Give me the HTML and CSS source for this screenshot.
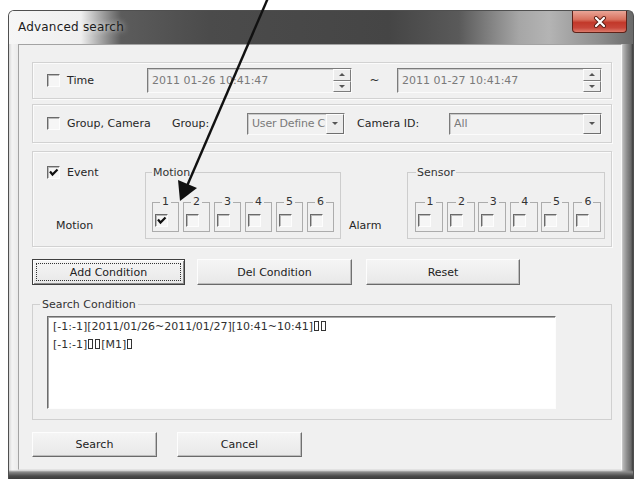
FILE: index.html
```html
<!DOCTYPE html>
<html lang="en">
<head>
<meta charset="UTF-8">
<title>Advanced search</title>
<link rel="stylesheet" href="styles.css">
</head>
<body>

<div class="win">
	<div class="caption">
		<span class="caption-text">Advanced search</span>
		<span class="close">
			<svg width="14" height="12" viewBox="0 0 14 12">
				<path d="M3 2 L11 10 M11 2 L3 10" stroke="#5a1d14" stroke-width="4" stroke-linecap="round"/>
				<path d="M3 2 L11 10 M11 2 L3 10" stroke="#fff" stroke-width="2.2" stroke-linecap="round"/>
			</svg>
		</span>
	</div>

	<div class="client">
		<!-- time range -->
		<div class="box box-time">
			<label class="lead"><span class="chk"></span>Time</label>
			<div class="field date">
				<span class="val">2011 01-26 10:41:47</span>
				<span class="spin"><i class="up"></i><i class="down"></i></span>
			</div>
			<span class="tilde">~</span>
			<div class="field date">
				<span class="val">2011 01-27 10:41:47</span>
				<span class="spin"><i class="up"></i><i class="down"></i></span>
			</div>
		</div>

		<!-- group / camera -->
		<div class="box box-cam">
			<label class="lead lead-wide"><span class="chk"></span>Group, Camera</label>
			<span class="lbl-group">Group:</span>
			<div class="field combo combo-group">
				<span class="val">User Define C</span>
				<span class="drop"></span>
			</div>
			<span class="lbl-cam">Camera ID:</span>
			<div class="field combo combo-cam">
				<span class="val">All</span>
				<span class="drop"></span>
			</div>
		</div>

		<!-- event -->
		<div class="box box-event">
			<div class="evside">
				<label class="lead"><span class="chk on"></span>Event</label>
				<span class="side-lbl">Motion</span>
			</div>
			<fieldset class="grp grp-motion">
				<legend>Motion</legend>
				<div class="minis">
					<fieldset class="mini"><legend>1</legend><span class="chk on"></span></fieldset>
					<fieldset class="mini"><legend>2</legend><span class="chk"></span></fieldset>
					<fieldset class="mini"><legend>3</legend><span class="chk"></span></fieldset>
					<fieldset class="mini"><legend>4</legend><span class="chk"></span></fieldset>
					<fieldset class="mini"><legend>5</legend><span class="chk"></span></fieldset>
					<fieldset class="mini"><legend>6</legend><span class="chk"></span></fieldset>
				</div>
			</fieldset>
			<span class="alarm-lbl">Alarm</span>
			<fieldset class="grp grp-sensor">
				<legend>Sensor</legend>
				<div class="minis">
					<fieldset class="mini"><legend>1</legend><span class="chk"></span></fieldset>
					<fieldset class="mini"><legend>2</legend><span class="chk"></span></fieldset>
					<fieldset class="mini"><legend>3</legend><span class="chk"></span></fieldset>
					<fieldset class="mini"><legend>4</legend><span class="chk"></span></fieldset>
					<fieldset class="mini"><legend>5</legend><span class="chk"></span></fieldset>
					<fieldset class="mini"><legend>6</legend><span class="chk"></span></fieldset>
				</div>
			</fieldset>
		</div>

		<div class="actions">
			<span class="btn btn-add"><span class="focus">Add Condition</span></span>
			<span class="btn btn-del">Del Condition</span>
			<span class="btn btn-reset">Reset</span>
		</div>

		<fieldset class="cond">
			<legend>Search Condition</legend>
			<div class="textbox">
				<p>[-1:-1][2011/01/26~2011/01/27][10:41~10:41]<i class="tofu"></i><i class="tofu"></i></p>
				<p>[-1:-1]<i class="tofu"></i><i class="tofu"></i>[M1]<i class="tofu"></i></p>
			</div>
		</fieldset>

		<div class="actions actions-bottom">
			<span class="btn btn-search">Search</span>
			<span class="btn btn-cancel">Cancel</span>
		</div>
	</div>
</div>

<!-- pointer drawn over the dialog -->
<svg class="pointer" width="637" height="479" viewBox="0 0 637 479">
	<path d="M268 -2 L187 186" stroke="#111" stroke-width="2.4" fill="none"/>
	<path d="M180 201 L178 180 L197 188 Z" fill="#111"/>
</svg>

</body>
</html>
```

FILE: styles.css
```css
*{ margin:0; padding:0; box-sizing:border-box; }
body{
	width:637px;
	height:479px;
	overflow:hidden;
	position:relative;
	background:#fff;
	font:11px/13px "DejaVu Sans", Tahoma, sans-serif;
	color:#262626;
}

/* window frame */
.win{
	margin:10px 0 0 8px;
	width:626px;
	height:472px;
	border:1px solid #4f4f4f;
	border-bottom:0;
	border-radius:6px 6px 0 0;
	background:
		linear-gradient(to bottom, rgba(0,0,0,0) 459px, #8a8a8a 461px, #4a4a4a 465px, #2e2e2e 100%),
		linear-gradient(to right, #d6d6d6 0, #f4f4f4 3px, #ebebeb 9px, #ebebeb 612px, #b7b7b7 614px, #8d8d8d 618px, #6a6a6a 622px, #3c3c3c 100%);
}
.caption{
	display:flex;
	height:33px;
	border-radius:5px 5px 0 0;
	background:linear-gradient(to right, #f6f6f6 0, #efefef 72px, #a4a4a4 92px, #5c5c5c 112px, #4b4b4b 200px, #454545 380px, #5a5a5a 450px, #a6a6a6 510px, #b4b4b4 540px, #8e8e8e 590px, #6a6a6a 100%);
}
.caption-text{
	padding:9px 0 0 9px;
	font-size:12px;
	line-height:14px;
	letter-spacing:0.2px;
	color:#1c1c1c;
	text-shadow:0 0 6px #fff;
}
.close{
	margin:0 6px 0 auto;
	width:55px;
	height:22px;
	display:flex;
	align-items:center;
	justify-content:center;
	border:1px solid #5d2219;
	border-top:0;
	border-radius:0 0 4px 4px;
	background:linear-gradient(#e9a597 0, #d9725f 40%, #c2382a 55%, #c8463a 80%, #de7c6c 100%);
}

/* dialog body */
.client{
	margin-left:9px;
	width:604px;
	height:426px;
	background:#f0f0f0;
	border:1px solid;
	border-color:#a3a3a3 #fafafa #e2e2e2 #a3a3a3;
}

.box{
	display:flex;
	align-items:center;
	margin-left:13px;
	width:580px;
	padding-left:14px;
	border:1px solid #d2d2d2;
	box-shadow:inset 1px 1px 0 #fbfbfb, 1px 1px 0 #fbfbfb;
}
.box-time{ margin-top:17px; height:37px; }
.box-cam{ margin-top:5px; height:39px; }
.box-event{
	margin-top:8px;
	height:96px;
	align-items:flex-start;
	padding-top:14px;
}

.lead{
	display:flex;
	align-items:center;
	width:100px;
	white-space:nowrap;
}
.lead-wide{ width:125px; }

.chk{
	display:inline-block;
	flex:none;
	width:13px;
	height:13px;
	margin-right:7px;
	border:1px solid;
	border-color:#6a6a6a #fdfdfd #fdfdfd #6a6a6a;
	box-shadow:inset 1px 1px 0 #b9b9b9;
	background:#f6f6f6;
}
.chk.on{
	background:#f6f6f6 url("data:image/svg+xml,%3Csvg xmlns='http://www.w3.org/2000/svg' width='11' height='11'%3E%3Cpath d='M2 4.5 L4.5 7.5 L9.5 2.5' stroke='%23111' stroke-width='2.2' fill='none'/%3E%3C/svg%3E") no-repeat 0 0;
}

/* edit boxes */
.field{
	display:flex;
	align-items:center;
	height:25px;
	border:1px solid;
	border-color:#7b7b7b #fbfbfb #fbfbfb #7b7b7b;
	box-shadow:inset 1px 1px 0 #cacaca;
	background:#f1f1f1;
	color:#7a7a7a;
}
.val{
	flex:1;
	overflow:hidden;
	white-space:nowrap;
}
.date{ width:205px; padding-left:4px; }
.spin{
	display:flex;
	flex-direction:column;
	width:18px;
	height:23px;
}
.spin i{
	flex:1;
	display:flex;
	align-items:center;
	justify-content:center;
	border:1px solid;
	border-color:#fdfdfd #7c7c7c #7c7c7c #fdfdfd;
	background:#ededed;
}
.spin i::after{
	content:"";
	border-left:3px solid transparent;
	border-right:3px solid transparent;
}
.spin .up::after{ border-bottom:3px solid #555; }
.spin .down::after{ border-top:3px solid #555; }
.tilde{
	width:45px;
	text-align:center;
	font-size:12px;
	color:#333;
}

.lbl-group{ width:75px; }
.lbl-cam{ margin-left:12px; width:92px; }
.combo{ height:22px; padding-left:4px; }
.combo-group{ width:98px; }
.combo-group .val{ letter-spacing:-0.2px; }
.combo-cam{ width:153px; }
.drop{
	display:flex;
	align-items:center;
	justify-content:center;
	width:18px;
	height:20px;
	border:1px solid;
	border-color:#fdfdfd #6f6f6f #6f6f6f #fdfdfd;
	background:#ececec;
}
.drop::after{
	content:"";
	border-left:3px solid transparent;
	border-right:3px solid transparent;
	border-top:3px solid #555;
}

/* event block */
.evside{
	display:flex;
	flex-direction:column;
	width:98px;
}
.side-lbl{ margin:40px 0 0 9px; }
.alarm-lbl{ margin:53px 0 0 8px; width:58px; }

fieldset{
	min-width:0;
	border:1px solid #cdcdcd;
}
legend{
	padding:0 1px;
	line-height:13px;
	color:#333;
}
.grp{
	padding:17px 0 6px 6px;
}
.grp-motion{ width:196px; }
.grp-sensor{ width:198px; padding-left:7px; }
.grp-sensor legend{ margin-left:1px; }

.minis{ display:flex; gap:4px; }
.grp-sensor .minis{ gap:3.6px; }
.mini{
	width:27px;
	height:36px;
	padding:6px 0 0 0;
	border-color:#acacac;
}
.grp-sensor .mini{ width:28px; }
/* centred number on the top edge */
.mini legend{
	width:11px;
	padding:0;
	line-height:12px;
	text-align:center;
}
.mini .chk{ margin:0 0 0 2px; }

/* push buttons */
.actions{
	display:flex;
	margin:12px 0 0 13px;
}
.btn{
	display:flex;
	align-items:center;
	justify-content:center;
	height:26px;
	border:1px solid;
	border-color:#fdfdfd #707070 #6a6a6a #fdfdfd;
	box-shadow:inset -1px -1px 0 #bdbdbd;
	background:linear-gradient(#f5f5f5, #e8e8e8);
	color:#222;
}
.btn-add{
	width:153px;
	border-color:#3f3f3f;
	box-shadow:inset 1px 1px 0 #fff, inset -1px -1px 0 #8a8a8a;
}
.btn-add .focus{
	flex:1;
	align-self:stretch;
	margin:3px;
	display:flex;
	align-items:center;
	justify-content:center;
	border:1px dotted #333;
}
.btn-del{ width:155px; margin-left:12px; }
.btn-reset{ width:154px; margin-left:14px; }

/* condition list */
.cond{
	margin:13px 0 0 13px;
	width:580px;
	padding:5px 0 10px 7px;
	border-color:#d0d0d0;
}
.cond legend{ padding:0 2px; }
.textbox{
	margin-left:7px;
	width:509px;
	height:93px;
	padding:1px 5px;
	border:1px solid;
	border-color:#6c6c6c #fdfdfd #fdfdfd #6c6c6c;
	box-shadow:inset 1px 1px 0 #a9a9a9;
	background:#fff;
	color:#303030;
	line-height:18px;
}
.tofu{
	display:inline-block;
	width:5px;
	height:10px;
	margin:0 1px;
	border:1px solid #333;
	vertical-align:-1px;
}

.actions-bottom{ margin-top:12px; }
.btn-search{ width:125px; height:25px; }
.btn-cancel{ width:125px; height:25px; margin-left:20px; }

.pointer{
	position:absolute;
	left:0;
	top:0;
	pointer-events:none;
}
```
